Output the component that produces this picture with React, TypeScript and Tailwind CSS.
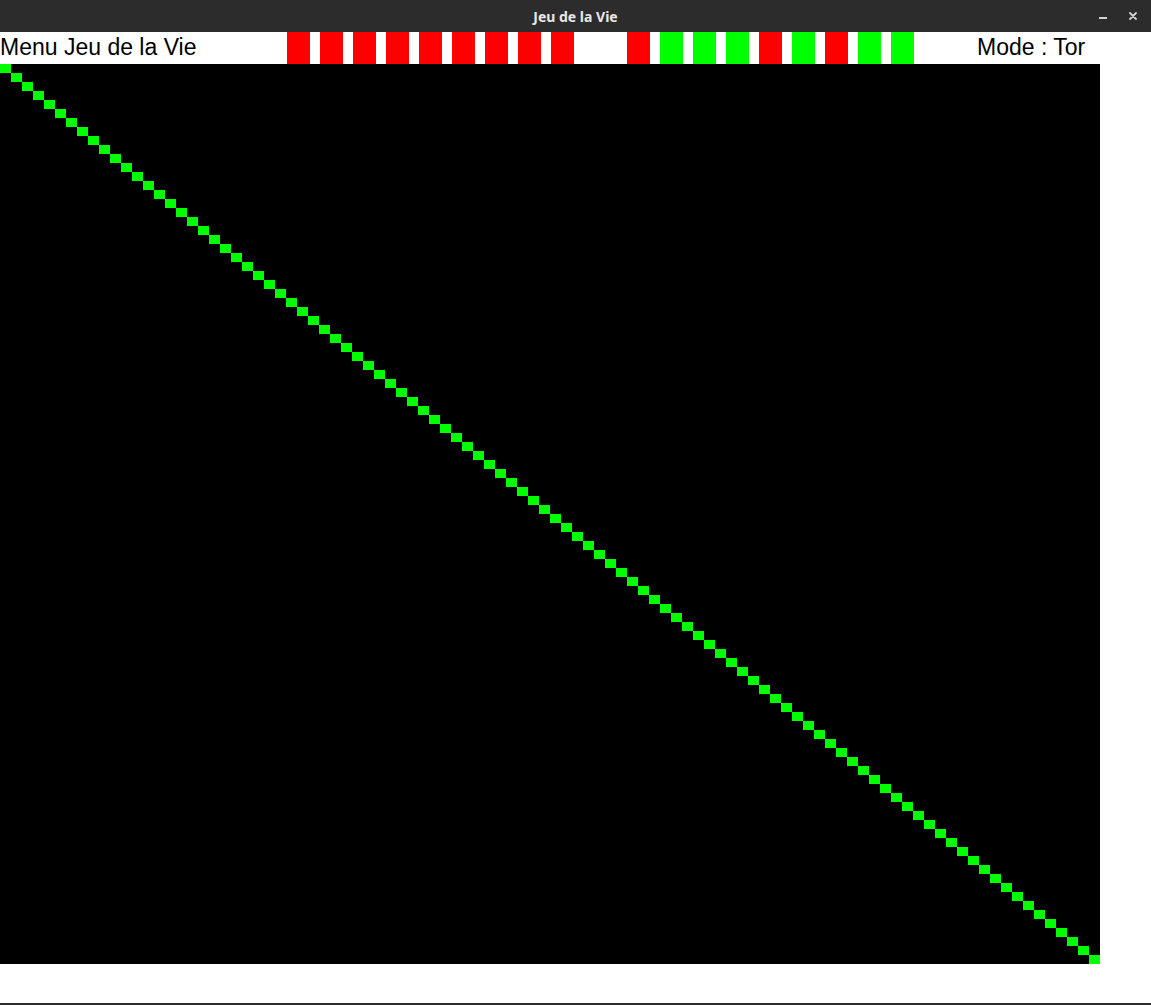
import React from 'react';

const leftCells = ['r', 'r', 'r', 'r', 'r', 'r', 'r', 'r', 'r'];
const rightCells = ['r', 'g', 'g', 'g', 'r', 'g', 'r', 'g', 'g'];

const Cell: React.FC<{ c: string }> = ({ c }) => (
  <div className={`w-[23px] h-8 ${c === 'r' ? 'bg-[#ff0000]' : 'bg-[#00ff00]'}`} />
);

const App: React.FC = () => {
  const diag = Array.from({ length: 100 }, (_, i) => i);

  return (
    <div className="w-[1151px] h-[1005px] bg-white flex flex-col overflow-hidden">
      {/* window title bar */}
      <div className="relative h-8 bg-[#2c2c2c] flex items-center justify-center shrink-0">
        <span className="text-[14px] font-bold text-[#e8e8e8]" style={{ fontFamily: '"Noto Sans", "Open Sans", sans-serif' }}>
          Jeu de la Vie
        </span>
        <div className="absolute right-0 top-0 h-8 flex items-center gap-[22px] pr-[14px]">
          <div className="w-2 h-[2px] bg-[#d0d0d0] mt-[3px]" />
          <svg width="8" height="8" viewBox="0 0 8 8">
            <path d="M1 1 L7 7 M7 1 L1 7" stroke="#d0d0d0" strokeWidth="1.8" strokeLinecap="round" />
          </svg>
        </div>
      </div>

      {/* menu bar */}
      <div className="h-8 flex items-center shrink-0 text-black text-[23px] leading-8" style={{ fontFamily: '"Liberation Sans", Arial, sans-serif' }}>
        <div className="w-[287px] shrink-0 -mt-[2px]">Menu Jeu de la Vie</div>
        <div className="flex gap-[10px]">
          {leftCells.map((c, i) => <Cell key={i} c={c} />)}
        </div>
        <div className="flex gap-[10px] ml-[53px]">
          {rightCells.map((c, i) => <Cell key={i} c={c} />)}
        </div>
        <div className="ml-[63px] -mt-[2px]">Mode : Tor</div>
      </div>

      {/* game grid */}
      <div className="w-[1100px] h-[900px] bg-black shrink-0">
        <svg width="1100" height="900" viewBox="0 0 1100 900" shapeRendering="crispEdges">
          {diag.map((i) => (
            <rect key={i} x={i * 11} y={i * 9} width="11" height="9" fill="#00ff00" />
          ))}
        </svg>
      </div>

      <div className="flex-1" />
      <div className="h-[2px] bg-[#2c2c2c] shrink-0" />
    </div>
  );
};

export default App;
